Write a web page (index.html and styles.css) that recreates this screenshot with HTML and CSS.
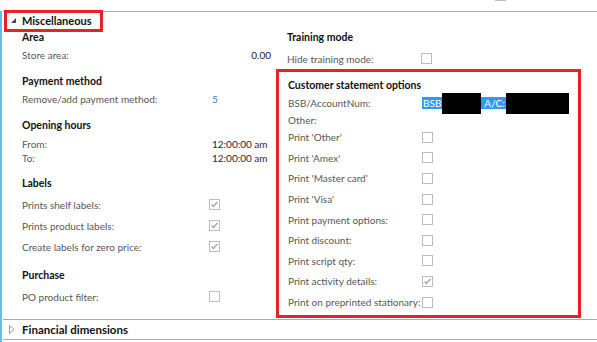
FILE: index.html
```html
<!DOCTYPE html>
<html lang="en">
<head>
    <meta charset="UTF-8">
    <title>Retail store - Miscellaneous</title>
    <link rel="stylesheet" href="styles.css">
</head>
<body>
    <div class="topStrip">
        <span class="checkBox partial"></span>
    </div>
    <div class="panel">
        <div class="fastTab">
            <div class="tabHeader">
                <svg class="arrow" width="5" height="5" viewBox="0 0 5 5"><polygon points="5,0 5,5 0,5" fill="#4a4a4a"/></svg>
                <span class="tabTitle">Miscellaneous</span>
                <span class="annotHeader"></span>
            </div>
            <div class="tabBody">
                <div class="col colLeft">
                    <div class="group">
                        <div class="groupTitle">Area</div>
                        <div class="row"><span class="label">Store area:</span><span class="value num">0.00</span></div>
                    </div>
                    <div class="group">
                        <div class="groupTitle">Payment method</div>
                        <div class="row"><span class="label">Remove/add payment method:</span><span class="value link">5</span></div>
                    </div>
                    <div class="group">
                        <div class="groupTitle hoursTitle">Opening hours</div>
                        <div class="row short"><span class="label">From:</span><span class="value time">12:00:00 am</span></div>
                        <div class="row short"><span class="label">To:</span><span class="value time">12:00:00 am</span></div>
                    </div>
                    <div class="group">
                        <div class="groupTitle">Labels</div>
                        <div class="checkList">
                            <div class="row checkRow"><span class="label">Prints shelf labels:</span><span class="checkBox checked"><svg width="11" height="11" viewBox="0 0 11 11"><path d="M2.5 5.5 L4.5 7.5 L8.5 2.8" fill="none" stroke="#a3a3a3" stroke-width="1.3"/></svg></span></div>
                            <div class="row checkRow"><span class="label">Prints product labels:</span><span class="checkBox checked"><svg width="11" height="11" viewBox="0 0 11 11"><path d="M2.5 5.5 L4.5 7.5 L8.5 2.8" fill="none" stroke="#a3a3a3" stroke-width="1.3"/></svg></span></div>
                            <div class="row checkRow"><span class="label">Create labels for zero price:</span><span class="checkBox checked"><svg width="11" height="11" viewBox="0 0 11 11"><path d="M2.5 5.5 L4.5 7.5 L8.5 2.8" fill="none" stroke="#a3a3a3" stroke-width="1.3"/></svg></span></div>
                        </div>
                    </div>
                    <div class="group">
                        <div class="groupTitle">Purchase</div>
                        <div class="checkList">
                            <div class="row checkRow"><span class="label">PO product filter:</span><span class="checkBox"></span></div>
                        </div>
                    </div>
                </div>
                <div class="col colRight">
                    <div class="group training">
                        <div class="groupTitle">Training mode</div>
                        <div class="checkList">
                            <div class="row checkRow"><span class="label">Hide training mode:</span><span class="checkBox"></span></div>
                        </div>
                    </div>
                    <div class="statementBox">
                        <div class="groupTitle">Customer statement options</div>
                        <div class="row bsbRow">
                            <span class="label">BSB/AccountNum:</span>
                            <span class="bsbValue">
                                <span class="sel">BSB</span><span class="redact r1"></span><span class="sel sel2">A/C:</span><span class="redact r2"></span>
                            </span>
                        </div>
                        <div class="row otherRow"><span class="label">Other:</span></div>
                        <div class="row stmtRow"><span class="label">Print 'Other'</span><span class="checkBox"></span></div>
                        <div class="row stmtRow"><span class="label">Print 'Amex'</span><span class="checkBox"></span></div>
                        <div class="row stmtRow"><span class="label">Print 'Master card'</span><span class="checkBox"></span></div>
                        <div class="row stmtRow"><span class="label">Print 'Visa'</span><span class="checkBox"></span></div>
                        <div class="row stmtRow"><span class="label">Print payment options:</span><span class="checkBox"></span></div>
                        <div class="row stmtRow"><span class="label">Print discount:</span><span class="checkBox"></span></div>
                        <div class="row stmtRow"><span class="label">Print script qty:</span><span class="checkBox"></span></div>
                        <div class="row stmtRow"><span class="label">Print activity details:</span><span class="checkBox checked"><svg width="11" height="11" viewBox="0 0 11 11"><path d="M2.5 5.5 L4.5 7.5 L8.5 2.8" fill="none" stroke="#a3a3a3" stroke-width="1.3"/></svg></span></div>
                        <div class="row stmtRow"><span class="label">Print on preprinted stationary:</span><span class="checkBox"></span></div>
                    </div>
                </div>
            </div>
        </div>
        <div class="fastTab closed">
            <div class="tabHeader">
                <svg class="arrow" width="6" height="9" viewBox="0 0 6 9"><polygon points="0.5,0.5 5,4.5 0.5,8.5" fill="none" stroke="#9c9c9c" stroke-width="1"/></svg>
                <span class="tabTitle">Financial dimensions</span>
            </div>
        </div>
    </div>
</body>
</html>
```
FILE: styles.css
```css
* {
    margin: 0;
    padding: 0;
    box-sizing: border-box;
}

body {
    width: 597px;
    height: 342px;
    overflow: hidden;
    background: #fff;
    font-family: Lato, "Liberation Sans", sans-serif;
    font-size: 10px;
    color: #575757;
}

.topStrip {
    height: 11px;
    display: flex;
    overflow: hidden;
}

.topStrip .partial {
    margin-top: -10px;
    margin-left: 495px;
}

.panel {
    height: 331px;
    border-left: 2px solid #5ec3ec;
}

.fastTab {
    margin-left: 1px;
    border-top: 1px solid #ababab;
}

.fastTab.closed {
    border-bottom: 1px solid #ababab;
}

.tabHeader {
    position: relative;
    display: flex;
    align-items: center;
    height: 17px;
}

.fastTab.closed .tabHeader {
    height: 19px;
}

.tabHeader .arrow {
    margin-left: 8px;
    margin-right: 6px;
}

.fastTab.closed .arrow {
    margin-left: 6px;
    margin-right: 7px;
}

.tabTitle {
    font-size: 11px;
    font-weight: bold;
    color: #111;
}

.fastTab.closed .tabTitle {
    font-size: 11.5px;
}

/* red annotation drawn over the header */
.annotHeader {
    position: absolute;
    left: 1px;
    top: -2px;
    width: 99px;
    height: 22px;
    border: 3px solid #e8202a;
}

.tabBody {
    display: flex;
    gap: 5px;
    padding-left: 19px;
    padding-bottom: 1px;
}

.colLeft {
    width: 249px;
}

.colRight {
    width: 305px;
}

.group {
    margin-bottom: 10px;
}

.groupTitle {
    height: 17px;
    line-height: 17px;
    font-size: 10.5px;
    font-weight: bold;
    color: #111;
    white-space: nowrap;
}

.hoursTitle {
    margin-bottom: 3px;
}

.row {
    display: flex;
    align-items: center;
    height: 17px;
    white-space: nowrap;
}

.row.short {
    height: 14px;
}

.label {
    width: 187px;
    flex-shrink: 0;
}

.value {
    padding-left: 3px;
    color: #222;
}

.value.num {
    flex: 1;
    text-align: right;
}

.value.link {
    color: #3a78d4;
}

.value.time {
    color: #262640;
}

.checkList {
    margin-top: 2px;
}

.checkRow {
    height: 21px;
}

.checkBox {
    display: inline-block;
    width: 11px;
    height: 11px;
    border: 1px solid #bdbdbd;
    background: #fff;
    flex-shrink: 0;
}

.checkBox svg {
    display: block;
    margin: -1px 0 0 -1px;
}

.colRight .group.training {
    padding-left: 11px;
    margin-bottom: 0;
}

.colRight .label {
    width: 134px;
}

.statementBox {
    border: 3px solid #e8202a;
    padding: 5px 0 3px 9px;
}

.bsbRow {
    height: 18px;
}

.otherRow {
    height: 15px;
}

.stmtRow {
    height: 20.6px;
}

.bsbValue {
    display: flex;
    align-items: center;
    height: 18px;
}

.sel {
    display: inline-block;
    height: 12px;
    line-height: 12px;
    padding: 0 1px;
    background: #3399f3;
    color: #fff;
}

.sel.sel2 {
    width: 25px;
    padding: 0 0 0 3px;
}

.redact {
    display: inline-block;
    height: 21px;
    background: #000;
}

.redact.r1 {
    width: 39px;
}

.redact.r2 {
    width: 63px;
}
```
